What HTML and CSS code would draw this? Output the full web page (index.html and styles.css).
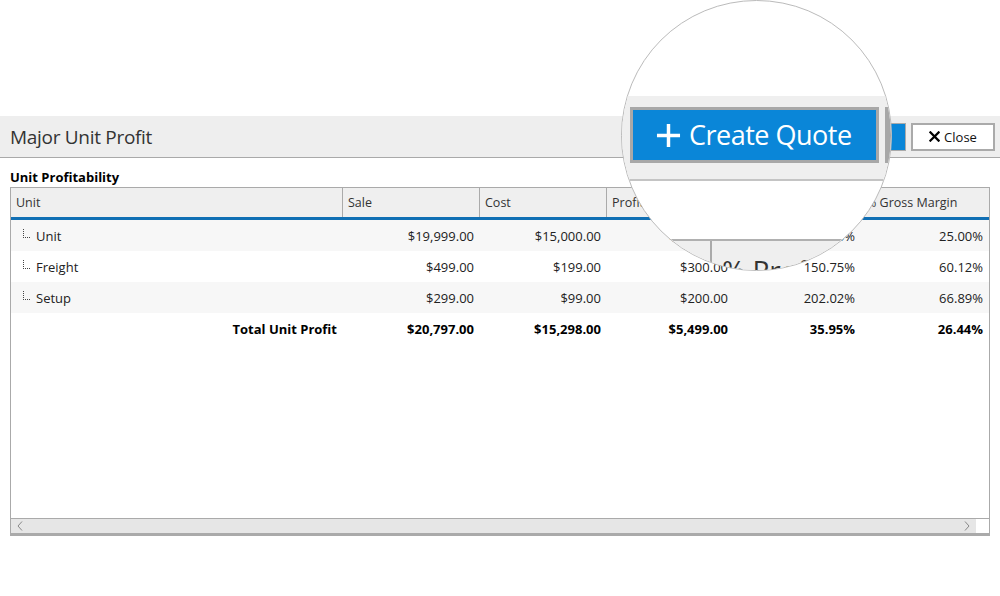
FILE: index.html
```html
<!DOCTYPE html>
<html>
<head>
<meta charset="utf-8">
<link rel="stylesheet" href="styles.css">
</head>
<body>
<div class="page">
  <div class="topspace"></div>
  <div class="header">
    <div class="title">Major Unit Profit</div>
    <div class="actions">
      <button class="btn-create">+ Create Quote</button>
      <button class="btn-close"><svg class="x-icon" viewBox="0 0 12 12" width="11" height="11"><path d="M1.5 1.5 L10.5 10.5 M10.5 1.5 L1.5 10.5" stroke="#000" stroke-width="2.4" stroke-linecap="square"/></svg>Close</button>
    </div>
  </div>
  <div class="section">
    <div class="section-title">Unit Profitability</div>
    <div class="grid">
      <div class="thead row">
        <div class="th">Unit</div>
        <div class="th">Sale</div>
        <div class="th">Cost</div>
        <div class="th">Profit</div>
        <div class="th">% Profit</div>
        <div class="th last">% Gross Margin</div>
      </div>
      <div class="row alt">
        <div class="td name"><svg class="tree" viewBox="0 0 8 9" width="8" height="9"><g fill="#444"><rect x="0" y="0" width="1" height="1"/><rect x="0" y="2" width="1" height="1"/><rect x="0" y="4" width="1" height="1"/><rect x="0" y="6" width="1" height="1"/><rect x="0" y="8" width="1" height="1"/><rect x="2" y="8" width="1" height="1"/><rect x="4" y="8" width="1" height="1"/><rect x="6" y="8" width="1" height="1"/></g></svg>Unit</div>
        <div class="td num">$19,999.00</div>
        <div class="td num">$15,000.00</div>
        <div class="td num">$4,999.00</div>
        <div class="td num">33.33%</div>
        <div class="td num">25.00%</div>
      </div>
      <div class="row">
        <div class="td name"><svg class="tree" viewBox="0 0 8 9" width="8" height="9"><g fill="#444"><rect x="0" y="0" width="1" height="1"/><rect x="0" y="2" width="1" height="1"/><rect x="0" y="4" width="1" height="1"/><rect x="0" y="6" width="1" height="1"/><rect x="0" y="8" width="1" height="1"/><rect x="2" y="8" width="1" height="1"/><rect x="4" y="8" width="1" height="1"/><rect x="6" y="8" width="1" height="1"/></g></svg>Freight</div>
        <div class="td num">$499.00</div>
        <div class="td num">$199.00</div>
        <div class="td num">$300.00</div>
        <div class="td num">150.75%</div>
        <div class="td num">60.12%</div>
      </div>
      <div class="row alt">
        <div class="td name"><svg class="tree" viewBox="0 0 8 9" width="8" height="9"><g fill="#444"><rect x="0" y="0" width="1" height="1"/><rect x="0" y="2" width="1" height="1"/><rect x="0" y="4" width="1" height="1"/><rect x="0" y="6" width="1" height="1"/><rect x="0" y="8" width="1" height="1"/><rect x="2" y="8" width="1" height="1"/><rect x="4" y="8" width="1" height="1"/><rect x="6" y="8" width="1" height="1"/></g></svg>Setup</div>
        <div class="td num">$299.00</div>
        <div class="td num">$99.00</div>
        <div class="td num">$200.00</div>
        <div class="td num">202.02%</div>
        <div class="td num">66.89%</div>
      </div>
      <div class="row total">
        <div class="td num">Total Unit Profit</div>
        <div class="td num">$20,797.00</div>
        <div class="td num">$15,298.00</div>
        <div class="td num">$5,499.00</div>
        <div class="td num">35.95%</div>
        <div class="td num">26.44%</div>
      </div>
      <div class="filler"></div>
      <div class="hscroll">
        <div class="track">
          <svg class="arrow" viewBox="0 0 6 10" width="6" height="10"><path d="M5 0.5 L1 5 L5 9.5" fill="none" stroke="#888" stroke-width="1"/></svg>
          <svg class="arrow" viewBox="0 0 6 10" width="6" height="10"><path d="M1 0.5 L5 5 L1 9.5" fill="none" stroke="#888" stroke-width="1"/></svg>
        </div>
        <div class="corner"></div>
      </div>
    </div>
  </div>

  <div class="magnifier">
    <div class="mag-band"></div>
    <div class="mag-btn"><svg class="mag-plus" viewBox="0 0 26 26" width="25" height="25"><path d="M13 1 V25 M1 13 H25" stroke="#fff" stroke-width="3.6"/></svg><span>Create Quote</span></div>
    <div class="mag-btn2"></div>
    <div class="mag-th">
      <div class="mag-cell"></div>
      <div class="mag-cell mag-text">% Profit</div>
    </div>
  </div>
</div>
</body>
</html>
```

FILE: styles.css
```css
* { box-sizing: border-box; }
html, body { margin: 0; padding: 0; background: #fff; }
body { font-family: "Open Sans", "Noto Sans", sans-serif; color: #222; }
.page { position: relative; width: 1000px; height: 596px; overflow: hidden; }
.topspace { height: 116px; }

.header {
  height: 42px;
  background: #eeeeee;
  border-bottom: 1px solid #a9a9a9;
  display: flex;
  align-items: center;
  justify-content: space-between;
  padding: 0 5px 0 10px;
}
.title { font-size: 19px; color: #333; letter-spacing: -0.3px; }
.actions { display: flex; gap: 5px; align-items: center; }
button { font-family: inherit; cursor: default; }
.btn-create {
  height: 28px; width: 140px;
  background: #0a86d8; color: #fff;
  border: 1px solid #aaa; font-size: 13px; padding: 0;
}
.btn-close {
  height: 28px; width: 84px;
  background: #fff; color: #111;
  border: 2px solid #aaa;
  font-size: 13px; padding: 0;
  display: flex; align-items: center; justify-content: center; gap: 4px;
}
.x-icon { display: block; }

.section { padding: 0 10px; }
.section-title { font-size: 13px; font-weight: 700; color: #000; margin-top: 11px; line-height: 17px; height: 17px; }
.grid {
  margin-top: 1px;
  border: 1px solid #aaa;
  border-bottom: 3px solid #aaa;
  height: 349px;
  display: flex;
  flex-direction: column;
}
.row {
  display: grid;
  grid-template-columns: 332px 137px 127px 127px 127px 1fr;
  height: 31px;
  font-size: 13px;
  color: #222;
  flex: none;
}
.row.alt { background: #f7f7f7; }
.thead {
  height: 32px;
  background: #efefef;
  border-bottom: 3px solid #106fb4;
}
.th {
  border-right: 1px solid #aaa;
  padding: 0 5px;
  display: flex; align-items: center;
  color: #333;
  font-size: 12.5px;
}
.th.last { border-right: none; }
.td { display: flex; align-items: center; padding: 0 6px; white-space: nowrap; }
.td.num { justify-content: flex-end; }
.td.name { padding-left: 12px; }
.tree { margin-right: 5px; margin-top: -5px; }
.total { font-weight: 700; color: #000; }
.filler { flex: 1; }
.hscroll {
  height: 15px;
  border-top: 1px solid #aaa;
  display: flex;
  flex: none;
}
.track {
  flex: 1;
  background: #e6e6e6;
  display: flex; align-items: center; justify-content: space-between;
  padding: 0 6px;
}
.corner { width: 13px; background: #fff; }

.magnifier {
  position: absolute;
  left: 621px; top: 0;
  width: 271px; height: 271px;
  border-radius: 50%;
  border: 1px solid #bbb;
  background: #fff;
  overflow: hidden;
  z-index: 5;
}
.mag-band {
  position: absolute; left: 0; right: 0; top: 95px; height: 85px;
  background: #efefef; border-bottom: 2px solid #c4c4c4;
}
.mag-btn {
  position: absolute; left: 8px; top: 106px; width: 249px; height: 56px;
  background: #0a86d8; border: 3px solid #a8a8a8;
  color: #fff; font-size: 27px; letter-spacing: -0.5px;
  display: flex; align-items: center; padding-left: 23px; gap: 8px;
}
.mag-btn span { margin-top: -2px; }
.mag-plus { display: block; }
.mag-btn2 {
  position: absolute; left: 263px; top: 106px; width: 6px; height: 56px;
  background: #a8a8a8;
}
.mag-th {
  position: absolute; left: 0; right: 0; top: 238px; height: 60px;
  background: #efefef; border-top: 2px solid #b0b0b0;
  display: flex;
}
.mag-cell { width: 90px; border-right: 2px solid #aaa; }
.mag-text {
  width: auto; border-right: none;
  font-size: 28px; color: #333; padding: 10px 0 0 10px;
}
```
